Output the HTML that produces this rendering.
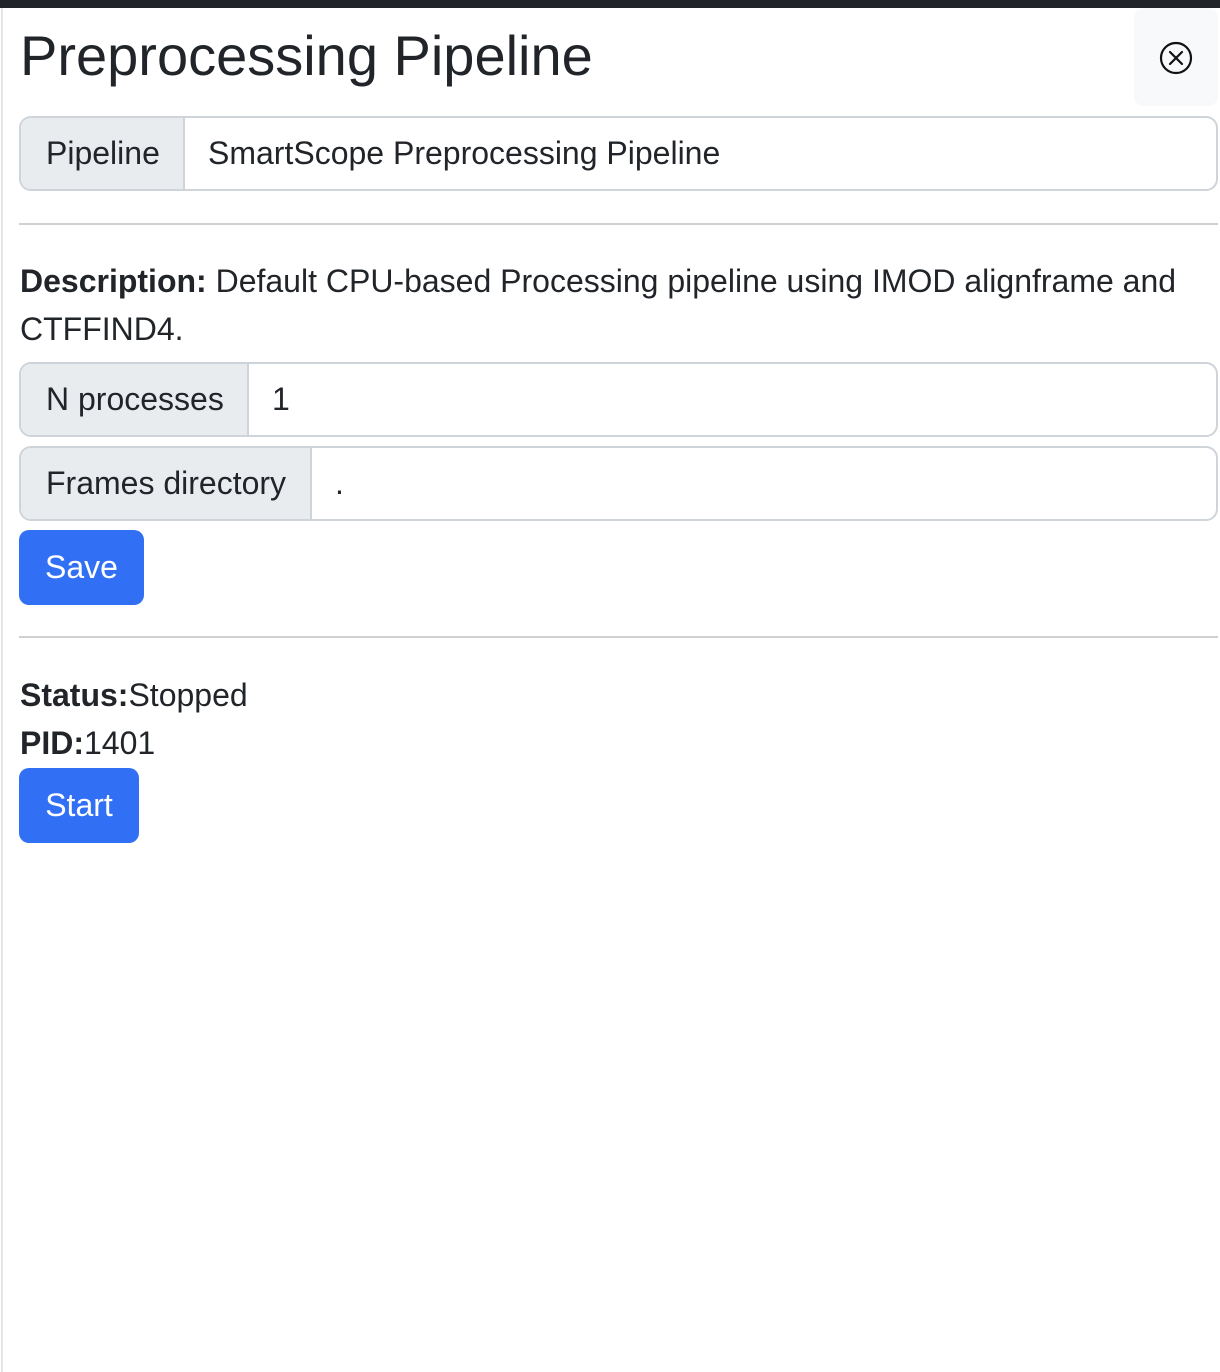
<!DOCTYPE html>
<html><head><meta charset="utf-8">
<style>
*{box-sizing:border-box;margin:0;padding:0}
html,body{width:1220px;height:1372px;background:#fff;overflow:hidden}
body{font-family:"Liberation Sans",Helvetica,Arial,sans-serif;color:#212529;position:relative;font-size:32px}
.topbar{position:absolute;left:0;top:0;width:1220px;height:8px;background:#212529}
.lb{position:absolute;left:1px;top:8px;width:2px;height:1364px;background:#e3e5e8}
h3{position:absolute;left:20px;top:22px;font-size:56px;font-weight:400;line-height:68px;white-space:nowrap}
.close{position:absolute;left:1134px;top:8px;width:84px;height:98px;background:#f8f9fa;border-radius:10px}
.close svg{position:absolute;left:25px;top:33px}
.ig{position:absolute;left:19px;width:1199px;height:75px;border:2px solid #ced4da;border-radius:12px;overflow:hidden;display:flex}
.ig .l{background:#e9ecef;border-right:2px solid #ced4da;padding:0 22px 0 25px;display:flex;align-items:center;white-space:nowrap}
.ig .v{padding:0 23px;display:flex;align-items:center;white-space:nowrap}
.hr{position:absolute;left:19px;width:1199px;height:2px;background:#cfd0d1}
.t{position:absolute;left:20px;white-space:nowrap;line-height:48px}
.btn{position:absolute;left:19px;height:75px;background:#3170f5;color:#fff;border-radius:10px;display:flex;align-items:center;justify-content:center}
</style></head><body>
<div class="topbar"></div>
<div class="lb"></div>
<h3>Preprocessing Pipeline</h3>
<div class="close"><svg width="34" height="34" viewBox="0 0 34 34"><circle cx="17" cy="17" r="15" fill="none" stroke="#111" stroke-width="2.2"/><path d="M11 11L23 23M23 11L11 23" stroke="#111" stroke-width="2.2" stroke-linecap="round"/></svg></div>
<div class="ig" style="top:116px"><div class="l" style="width:164px">Pipeline</div><div class="v">SmartScope Preprocessing Pipeline</div></div>
<div class="hr" style="top:223px"></div>
<div class="t" style="top:257px"><b>Description:</b> Default CPU-based Processing pipeline using IMOD alignframe and</div>
<div class="t" style="top:305px">CTFFIND4.</div>
<div class="ig" style="top:362px"><div class="l" style="width:228px">N processes</div><div class="v">1</div></div>
<div class="ig" style="top:446px"><div class="l" style="width:291px">Frames directory</div><div class="v">.</div></div>
<div class="btn" style="top:530px;width:125px">Save</div>
<div class="hr" style="top:636px"></div>
<div class="t" style="top:671px"><b>Status:</b>Stopped</div>
<div class="t" style="top:719px"><b>PID:</b>1401</div>
<div class="btn" style="top:768px;width:120px">Start</div>
</body></html>
